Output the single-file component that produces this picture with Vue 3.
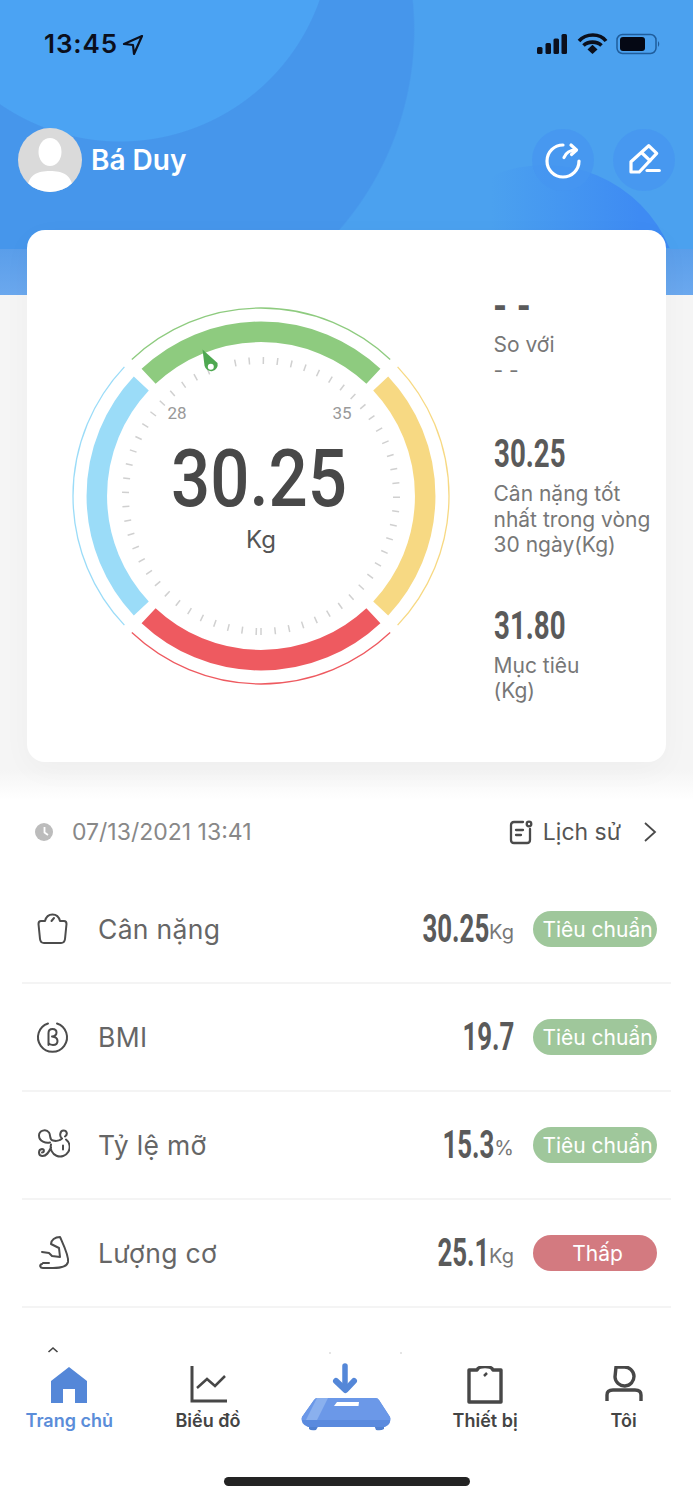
<template>
  <div class="page">
    <header class="header">
      <div class="status">
        <div class="time">
          <span>13:45</span>
          <svg width="22" height="22" viewBox="0 0 22 22"><path d="M20 2 L2 10 L11 11 L12 20 Z" fill="none" stroke="#0b0f1c" stroke-width="2.2" stroke-linejoin="round" /></svg>
        </div>
        <svg width="128" height="28" viewBox="533 30 128 28">
          <rect x="537" y="47" width="5.5" height="7" rx="1.5" fill="#0b0f1c" />
          <rect x="545.5" y="43" width="5.5" height="11" rx="1.5" fill="#0b0f1c" />
          <rect x="553.5" y="38.500" width="5.5" height="15.500" rx="1.5" fill="#0b0f1c" />
          <rect x="561.5" y="34" width="5.500" height="20" rx="1.5" fill="#0b0f1c" />
          <path d="M579 41 C586 33 600 33 606 41 M583.500 45.500 C588 41 597 41 601.500 45.500" fill="none" stroke="#0b0f1c" stroke-width="3.6" />
          <path d="M587.500 49.500 L592.500 44.800 L597.500 49.500 L592.500 54 Z" fill="#0b0f1c" />
          <rect x="617" y="34.500" width="39" height="19" rx="5.500" fill="none" stroke="#1f5d9c" stroke-width="1.500" />
          <rect x="620" y="37" width="25" height="14" rx="3" fill="#050814" />
          <path d="M658 41 Q660.500 44 658 47 Z" fill="#1f5d9c" />
        </svg>
      </div>
      <div class="user">
        <svg class="avatar" width="64" height="64" viewBox="0 0 64 64">
          <defs><clipPath id="av"><circle cx="32" cy="32" r="32" /></clipPath></defs>
          <g clip-path="url(#av)">
            <rect width="64" height="64" fill="#dadada" />
            <ellipse cx="32" cy="24" rx="11.500" ry="14" fill="#fff" />
            <path d="M9 64 C9 46 20 43 32 43 C44 43 55 46 55 64 Z" fill="#fff" />
          </g>
        </svg>
        <span class="name">Bá Duy</span>
        <div class="actions">
          <button class="round">
            <svg width="40" height="40" viewBox="0 0 40 40" fill="none" stroke="#fff" stroke-width="3.200" stroke-linecap="round" stroke-linejoin="round">
              <path d="M20 5 A16 16 0 1 0 36 21" />
              <path d="M21 17.500 C23 12.500 27 10 33 10" />
              <path d="M28 5 L33.500 10 L28.500 14.500" />
            </svg>
          </button>
          <button class="round">
            <svg width="40" height="40" viewBox="0 0 40 40" fill="none" stroke="#fff" stroke-width="3.200" stroke-linecap="round" stroke-linejoin="round">
              <path d="M7 32 V21.700 L24.700 5.700 L32.700 13.300 L15.300 32 Z" />
              <path d="M18 13 L26 20.700" />
              <path d="M23 30.500 H35.300" />
            </svg>
          </button>
        </div>
      </div>
    </header>

    <section class="card">
      <svg class="gauge" width="400" height="400" viewBox="-200 -200 400 400">
        <path v-for="a in arcs" :key="a.color" :d="arcPath(164.2, a.from, a.to)" fill="none" :stroke="a.color" stroke-width="20.500" />
        <path v-for="a in arcs" :key="a.color + 'l'" :d="arcPath(188, a.from - 0.2, a.to + 0.2)" fill="none" :stroke="a.color" stroke-width="1.300" />
        <line v-for="(t, i) in ticks" :key="i" :x1="t.x1" :y1="t.y1" :x2="t.x2" :y2="t.y2" stroke="#d0d0d0" stroke-width="1.500" />
        <path d="M-58.500 -146.500 L-43.500 -133 A6.500 6.500 0 1 1 -56.400 -130 Z" fill="#4ea851" />
        <circle cx="-50.200" cy="-129.300" r="3" fill="#fff" />
        <text x="-84" y="-77" class="tick-label" text-anchor="middle">28</text>
        <text x="81" y="-77" class="tick-label" text-anchor="middle">35</text>
        <text x="-2" y="10" class="big" text-anchor="middle" textLength="176" lengthAdjust="spacingAndGlyphs">30.25</text>
        <text x="0" y="52" class="unit" text-anchor="middle">Kg</text>
      </svg>
      <div class="info">
        <div class="stat first">
          <div class="dash">- -</div>
          <div class="lab">So với<br />- -</div>
        </div>
        <div class="stat">
          <div class="num">30.25</div>
          <div class="lab">Cân nặng tốt<br />nhất trong vòng<br />30 ngày(Kg)</div>
        </div>
        <div class="stat">
          <div class="num">31.80</div>
          <div class="lab">Mục tiêu<br />(Kg)</div>
        </div>
      </div>
    </section>

    <div class="date-row">
      <svg width="18" height="18" viewBox="0 0 18 18">
        <circle cx="9" cy="9" r="9" fill="#bcbcbc" />
        <path d="M9.500 4 V9.500 L13 12" fill="none" stroke="#fff" stroke-width="1.800" />
      </svg>
      <span class="date">07/13/2021 13:41</span>
      <svg class="hist-icon" width="24" height="26" viewBox="0 0 24 26" fill="none" stroke="#4a4a4a" stroke-width="2.300" stroke-linecap="round">
        <path d="M14 3 H5 Q2 3 2 6 V21 Q2 24 5 24 H18 Q21 24 21 21 V10" />
        <circle cx="20" cy="5" r="2.300" />
        <path d="M7 11 H14 M7 16 H12" />
      </svg>
      <span class="hist">Lịch sử</span>
      <svg width="16" height="22" viewBox="0 0 16 22"><path d="M3 2 L13 11 L3 20" fill="none" stroke="#4a4a4a" stroke-width="1.800" /></svg>
    </div>

    <div class="list">
      <div v-for="row in rows" :key="row.name" class="row">
        <svg class="row-icon" width="35" height="35" :viewBox="row.box" fill="none" stroke="#4c4c4c" stroke-width="2" stroke-linecap="round" stroke-linejoin="round">
          <path :d="row.icon" />
        </svg>
        <span class="row-name">{{ row.name }}</span>
        <span class="row-val">{{ row.value }}</span>
        <span class="row-unit">{{ row.unit }}</span>
        <span class="badge" :class="{ low: row.low }">{{ row.tag }}</span>
      </div>
      <svg class="peek" width="693" height="10" viewBox="0 0 693 10">
        <path d="M48.500 6 L53 2 L57.500 6" fill="none" stroke="#444" stroke-width="1.600" />
        <circle cx="330" cy="7" r="1" fill="#ddd" />
        <circle cx="401" cy="7" r="1" fill="#ddd" />
      </svg>
    </div>

    <nav class="tabs">
      <div class="tab active">
        <div class="tab-icon">
          <svg width="38" height="38" viewBox="0 0 38 38"><path d="M1 15 L19 1 L37 15 V37 H25 V23 H13 V37 H1 Z" fill="#5487d8" /></svg>
        </div>
        <span>Trang chủ</span>
      </div>
      <div class="tab">
        <div class="tab-icon">
          <svg width="38" height="38" viewBox="0 0 38 38" fill="none" stroke="#474747" stroke-width="3"><path d="M3 0 V35 H38" /><path d="M8 22 L18 13 L26 20 L36 10" stroke-width="2.500" /></svg>
        </div>
        <span>Biểu đồ</span>
      </div>
      <div class="tab">
        <div class="tab-icon">
          <svg class="scale" width="115" height="90" viewBox="0 0 115 90">
            <path d="M56 15 V36" stroke="#5487d8" stroke-width="5.500" stroke-linecap="round" fill="none" />
            <path d="M47 30 L56.500 39 L65 30" stroke="#5487d8" stroke-width="6" stroke-linecap="round" stroke-linejoin="round" fill="none" />
            <path d="M20 74 H30 L27 79 Q22 80 20 78 Z M85 74 H95 L95 78 Q92 80 87 79 Z" fill="#5080d0" />
            <path d="M25 49 Q26 47 29 47 H86 Q89 47 90 49 L101 66 Q103 73 96 76 H19 Q11 73 13 66 Z" fill="#5a8ade" />
            <path d="M25 49 Q26 47 29 47 H86 Q89 47 90 49 L101 66 Q102 68 101 69 H13 Q12 68 13 66 Z" fill="#6b98e8" />
            <path d="M28 47 H39 L28 69 H17 Z" fill="#8ab0ee" />
            <path d="M48 51 H70 L69.500 55 H45 Z" fill="#fff" />
          </svg>
        </div>
        <span></span>
      </div>
      <div class="tab">
        <div class="tab-icon">
          <svg width="38" height="38" viewBox="0 0 38 38" fill="none" stroke="#474747" stroke-width="3.400" stroke-linejoin="round"><path d="M11 4 H3 V36 H35 V4 H27 C25 -0.500 13 -0.500 11 4 Z" /><path d="M18 10 L21 7" stroke-width="2.500" /></svg>
        </div>
        <span>Thiết bị</span>
      </div>
      <div class="tab">
        <div class="tab-icon">
          <svg width="38" height="38" viewBox="0 0 38 38" fill="none" stroke="#474747" stroke-width="3.400"><path d="M11 1 H19 A9.500 9.500 0 1 1 10 11 Z" stroke-linejoin="round" /><path d="M2 35 V29 Q2 24 8 24 H30 Q36 24 36 29 V35" /></svg>
        </div>
        <span>Tôi</span>
      </div>
    </nav>
    <div class="indicator"></div>
  </div>
</template>

<script setup>
const arcs = [
  { from: -43.2, to: 43.2, color: '#8ecb7f' },
  { from: 46.8, to: 133.2, color: '#f7d983' },
  { from: 136.8, to: 223.2, color: '#ee5a60' },
  { from: 226.8, to: 313.2, color: '#9bdcf8' },
]

const polar = (r, deg) => {
  const rad = (deg * Math.PI) / 180
  return [r * Math.sin(rad), -r * Math.cos(rad)]
}

const arcPath = (r, from, to) => {
  const [x1, y1] = polar(r, from)
  const [x2, y2] = polar(r, to)
  return `M${x1} ${y1} A${r} ${r} 0 0 1 ${x2} ${y2}`
}

const ticks = []
for (let k = 0; k < 61; k++) {
  const deg = 180 - k * 5.9667
  // the pointer sits over this one
  if (k === 33) continue
  const [x1, y1] = polar(132, deg)
  const [x2, y2] = polar(139, deg)
  ticks.push({ x1, y1, x2, y2 })
}

const rows = [
  {
    name: 'Cân nặng',
    value: '30.25',
    unit: 'Kg',
    tag: 'Tiêu chuẩn',
    box: '0 0 35 35',
    icon: 'M10 9 H6 Q3.500 9 3.500 12 L5 27 Q5.500 31 9 31 H26 Q29.500 31 30 27 L31.500 12 Q31.500 9 29 9 H25 C24 5 21 2.500 17.500 2.500 C14 2.500 11 5 10 9 Z M16.500 9 L19 6',
  },
  {
    name: 'BMI',
    value: '19.7',
    unit: '',
    tag: 'Tiêu chuẩn',
    box: '0 0 35 35',
    icon: 'M13 3.500 A14.500 14.500 0 1 0 22 3.500 M13.500 25 V13 Q13.500 9 17.500 9 Q21.500 9 21.500 12.500 Q21.500 16 17 16.500 Q22.500 17 22.500 21 Q22.500 25 18 25 Q15 25 13.500 23',
  },
  {
    name: 'Tỷ lệ mỡ',
    value: '15.3',
    unit: '%',
    tag: 'Tiêu chuẩn',
    box: '10 8.500 35 35',
    icon: 'M25 23 C21 24 14 22 14 16 C14 11 21 9 24 13 C26 16 24 20 28 21 C31 22 35 21 37 19 C34 17 35 11 38.500 11 C42 11 43 15 40 17 M26 28 C24 32 22 37 17 36.500 C13 36 13 30 17 29.500 C19.500 29.500 19.500 33 17 33 M26 25 A9.500 9.500 0 1 0 41 20 M38 26 V30',
  },
  {
    name: 'Lượng cơ',
    value: '25.1',
    unit: 'Kg',
    tag: 'Thấp',
    low: true,
    box: '10 117 35 35',
    icon: 'M17 133 L24 134 L27 137 L35 138 L34 129 L26 125 C26 121 30 118 35 118 C39 127 44 137 43 143 C42 148 35 149 28 149 L18 149 C15 149 14 146 17 145 M18 144 H24',
  },
]
</script>

<style>
html,
body {
  margin: 0;
  background: #fff;
}
</style>

<style scoped>
.page {
  width: 693px;
  height: 1500px;
  overflow: hidden;
  font-family: Inter, "Liberation Sans", sans-serif;
  background: linear-gradient(#f5f5f5 770px, #fff 800px);
}

.header {
  position: relative;
  isolation: isolate;
  height: 295px;
  overflow: hidden;
  background:
    linear-gradient(#5a9eea, #6ba8ee) bottom / 100% 46px no-repeat,
    radial-gradient(circle 212px at 120px -70px, #4ba3f3 99.500%, transparent 100%),
    radial-gradient(circle 305px at 110px 30px, #4696eb 99.500%, transparent 100%),
    #4ba1ef;
}

.header::before {
  content: "";
  position: absolute;
  z-index: -1;
  left: 410px;
  top: 165px;
  width: 270px;
  height: 270px;
  border-radius: 50%;
  background: linear-gradient(to right, rgba(62, 139, 243, 0) 30%, #3e8bf3 85%);
  clip-path: inset(0 0 187px 0);
}

.status {
  height: 88px;
  box-sizing: border-box;
  display: flex;
  justify-content: space-between;
  padding: 30px 32px 0 44px;
}

.time {
  display: flex;
  align-items: flex-start;
  gap: 4px;
  font-size: 26px;
  font-weight: 600;
  line-height: 28px;
  letter-spacing: 0.9px;
  color: #0b0f1c;
}

.time svg {
  margin-top: 4px;
}

.user {
  margin-top: 40px;
  padding: 0 18px;
  display: flex;
  align-items: center;
}

.name {
  margin-left: 9px;
  font-size: 28px;
  font-weight: 600;
  color: #fff;
}

.actions {
  margin-left: auto;
  display: flex;
  gap: 19px;
}

.round {
  width: 62px;
  height: 62px;
  padding: 0;
  border: 0;
  border-radius: 50%;
  background: rgba(70, 150, 240, 0.75);
  display: flex;
  align-items: center;
  justify-content: center;
}

.card {
  position: relative;
  margin: -65px 27px 0;
  height: 532px;
  background: #fff;
  border-radius: 18px;
  box-shadow: 0 8px 30px rgba(0, 0, 0, 0.03);
  display: flex;
  padding: 0 0 0 33.500px;
  box-sizing: border-box;
}

.gauge {
  margin-top: 66px;
  flex-shrink: 0;
}

.tick-label {
  font: 17px Roboto, sans-serif;
  fill: #999;
}

.big {
  font: 500 80px Roboto, sans-serif;
  fill: #484848;
}

.unit {
  font: 24px Inter, sans-serif;
  fill: #555;
}

.info {
  margin-left: 33px;
  padding-top: 56px;
}

.stat {
  margin-bottom: 48px;
  color: #777;
}

.stat.first {
  margin-bottom: 51px;
}

.stat.first .lab {
  margin-top: 6px;
}

.num {
  height: 40px;
  line-height: 40px;
  font-family: Roboto, sans-serif;
  font-weight: 700;
  font-size: 39px;
  color: #5a5a5a;
  transform: scaleX(0.71);
  transform-origin: left center;
}

.dash {
  height: 40px;
  line-height: 38px;
  font-family: "Liberation Sans", sans-serif;
  font-weight: 700;
  font-size: 39px;
  color: #5a5a5a;
}

.lab {
  margin-top: 7px;
  font-size: 21px;
  line-height: 25.500px;
  color: #777;
}

.date-row {
  margin-top: 55px;
  height: 30px;
  padding: 0 35px;
  display: flex;
  align-items: center;
}

.date {
  margin-left: 19px;
  font-size: 23px;
  color: #888;
}

.hist-icon {
  margin-left: auto;
}

.hist {
  margin: 0 21px 0 10px;
  font-size: 23px;
  color: #555;
}

.list {
  height: 478px;
  margin-top: 29px;
  overflow: hidden;
}

.row {
  height: 108px;
  margin: 0 22px;
  padding: 0 14px 0 13px;
  box-sizing: border-box;
  display: flex;
  align-items: center;
  border-bottom: 2px solid #f4f4f4;
}

.row-name {
  margin-left: 28px;
  font-size: 26.500px;
  letter-spacing: 0.3px;
  color: #666;
  margin-right: auto;
}

.row-val {
  font-family: Roboto, sans-serif;
  font-weight: 700;
  font-size: 38px;
  color: #5a5a5a;
  transform: scaleX(0.68);
  transform-origin: right center;
}

.row-unit {
  font-size: 20px;
  color: #777;
  margin-top: 5px;
}

.badge {
  margin-left: 19px;
  width: 124px;
  height: 36px;
  box-sizing: border-box;
  padding-left: 5px;
  border-radius: 18px;
  background: #9fc79b;
  color: #fff;
  font-size: 21px;
  line-height: 37px;
  text-align: center;
  white-space: nowrap;
}

.badge.low {
  background: #d37a80;
}

.peek {
  display: block;
  margin-top: 38px;
}

.tabs {
  height: 111px;
  display: grid;
  grid-template-columns: repeat(5, 1fr);
  padding-top: 12px;
  box-sizing: border-box;
}

.tab {
  display: flex;
  flex-direction: column;
  align-items: center;
  font-size: 18px;
  line-height: 20px;
  font-weight: 600;
  color: #444;
}

.tab.active {
  color: #5b8dd9;
}

.tab-icon {
  height: 45px;
  display: flex;
  justify-content: center;
}

.scale {
  flex-shrink: 0;
  margin-top: -15px;
}

.indicator {
  width: 246px;
  height: 9px;
  margin: 12px auto 0;
  border-radius: 5px;
  background: #232323;
}
</style>
